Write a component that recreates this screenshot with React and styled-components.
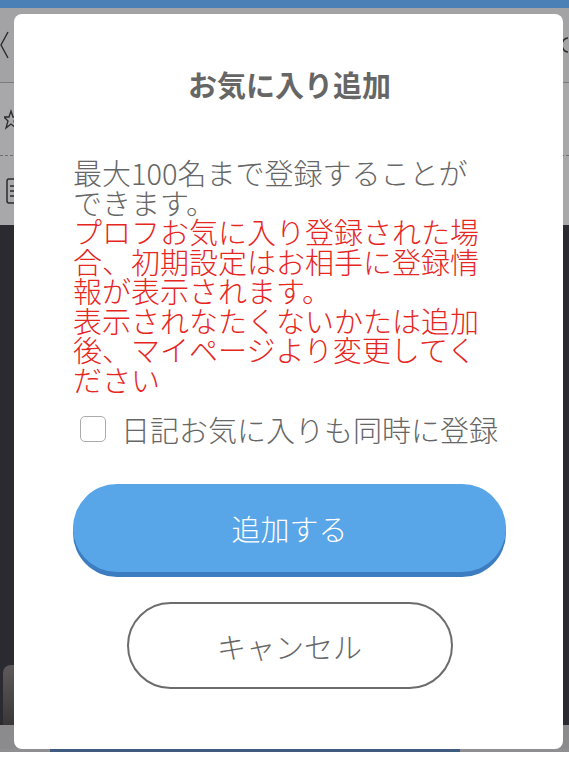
import React from 'react';
import styled, { createGlobalStyle } from 'styled-components';

const Global = createGlobalStyle`
  html, body { margin: 0; padding: 0; }
  body {
    width: 569px;
    height: 769px;
    overflow: hidden;
    background: #ffffff;
    font-family: "Noto Sans CJK JP", "Noto Sans", sans-serif;
  }
`;

const Screen = styled.div`
  position: relative;
  width: 569px;
  height: 769px;
  display: flex;
  flex-direction: column;
  background: #ffffff;
`;

const StatusBar = styled.div`
  flex: none;
  height: 8px;
  background: #4b80b6;
`;

const Header = styled.div`
  flex: none;
  height: 74px;
  background: #a3a3a5;
  border-bottom: 1px solid #7b7b7d;
  display: flex;
  align-items: center;
  justify-content: space-between;
`;

const MenuRow = styled.div`
  flex: none;
  height: ${p => p.$h}px;
  background: #a8a8aa;
  border-bottom: ${p => (p.$dashed ? '1px dashed #6f6f71' : 'none')};
  display: flex;
  align-items: center;
  padding-left: ${p => p.$pad}px;
`;

const DarkArea = styled.div`
  flex: none;
  height: 440px;
  background: #2a2a30;
`;

const ThumbArea = styled.div`
  flex: none;
  height: 60px;
  background: #2a2a30;
  display: flex;
  justify-content: space-between;
  padding: 0 0 0 3px;
`;

const Thumb = styled.div`
  width: 40px;
  height: 60px;
  border-radius: 8px 8px 0 0;
  background: linear-gradient(180deg, #5e5a5c 0%, #3a3739 100%);
`;

const GrayBar = styled.div`
  flex: none;
  height: 24px;
  background: #8b8b8d;
`;

const EdgeLine = styled.div`
  flex: none;
  height: 3px;
  background: linear-gradient(90deg, #8f8f91 0 50px, #3f5b80 50px 460px, #8f8f91 460px);
`;

const Overlay = styled.div`
  position: absolute;
  top: 14px;
  left: 14px;
  width: 549px;
  height: 735px;
  box-sizing: border-box;
  background: #ffffff;
  border-radius: 8px;
  padding: 55px 57px 0 59px;
  display: flex;
  flex-direction: column;
  align-items: stretch;
`;

const Title = styled.h2`
  margin: 0;
  text-align: center;
  font-size: 29px;
  line-height: 30px;
  font-weight: 700;
  color: #666666;
`;

const Message = styled.div`
  max-width: 418px;
  font-size: 29px;
  line-height: 29.5px;
  font-weight: 300;
  color: ${p => (p.$red ? '#e6271f' : '#666666')};
  margin-top: ${p => (p.$red ? '0' : '59px')};
`;

const CheckRow = styled.label`
  margin-top: 20px;
  display: flex;
  align-items: center;
  gap: 15px;
  padding-left: 7px;
  height: 30px;
  font-size: 29px;
  line-height: 30px;
  font-weight: 300;
  color: #666666;
`;

const Box = styled.span`
  flex: none;
  width: 26px;
  height: 26px;
  box-sizing: border-box;
  border: 1.5px solid #ababab;
  border-radius: 5px;
  background: #ffffff;
`;

const PrimaryButton = styled.button`
  margin-top: 40px;
  height: 88px;
  border: none;
  border-radius: 44px;
  background: #58a5e8;
  box-shadow: 0 5px 0 #3c7cc1;
  color: #ffffff;
  font-family: inherit;
  font-size: 29px;
  line-height: 30px;
  font-weight: 300;
  padding: 0;
`;

const CancelButton = styled.button`
  margin-top: 30px;
  align-self: center;
  width: 326px;
  height: 87px;
  box-sizing: border-box;
  border: 2px solid #6c6c6c;
  border-radius: 44px;
  background: #ffffff;
  color: #666666;
  font-family: inherit;
  font-size: 29px;
  line-height: 30px;
  font-weight: 300;
  padding: 0;
`;

const Chevron = () => (
  <svg width="10" height="30" viewBox="0 0 10 30">
    <path d="M8 2 L1 15 L8 28" fill="none" stroke="#2b2b2b" strokeWidth="1.4" />
  </svg>
);

const EdgeGlyph = () => (
  <svg width="8" height="20" viewBox="0 0 8 20">
    <path d="M7 3 A6 7 0 0 0 7 17" fill="none" stroke="#2b2b2b" strokeWidth="1.6" />
  </svg>
);

const Star = () => (
  <svg width="14" height="24" viewBox="0 0 14 24">
    <path d="M7 4 L9 10 L14 10 L10 14 L12 21 L7 17 L2 21 L4 14 L0 10 L5 10 Z" fill="none" stroke="#2b2b2b" strokeWidth="1.3" />
  </svg>
);

const ListIcon = () => (
  <svg width="10" height="26" viewBox="0 0 10 26">
    <rect x="1" y="1" width="12" height="24" rx="2" fill="none" stroke="#2b2b2b" strokeWidth="1.5" />
    <path d="M4 8 H10 M4 13 H10 M4 18 H10" stroke="#2b2b2b" strokeWidth="1.5" />
  </svg>
);

export default function App() {
  return (
    <>
      <Global />
      <Screen>
        <StatusBar />
        <Header>
          <Chevron />
          <EdgeGlyph />
        </Header>
        <MenuRow $h={72} $dashed $pad={4}>
          <Star />
        </MenuRow>
        <MenuRow $h={69} $pad={6}>
          <ListIcon />
        </MenuRow>
        <DarkArea />
        <ThumbArea>
          <Thumb />
        </ThumbArea>
        <GrayBar />
        <EdgeLine />

        <Overlay>
          <Title>お気に入り追加</Title>
          <Message>最大100名まで登録することができます。</Message>
          <Message $red>
            プロフお気に入り登録された場合、初期設定はお相手に登録情報が表示されます。
            <br />
            表示されなたくないかたは追加後、マイページより変更してください
          </Message>
          <CheckRow>
            <Box />
            <span>日記お気に入りも同時に登録</span>
          </CheckRow>
          <PrimaryButton>追加する</PrimaryButton>
          <CancelButton>キャンセル</CancelButton>
        </Overlay>
      </Screen>
    </>
  );
}
